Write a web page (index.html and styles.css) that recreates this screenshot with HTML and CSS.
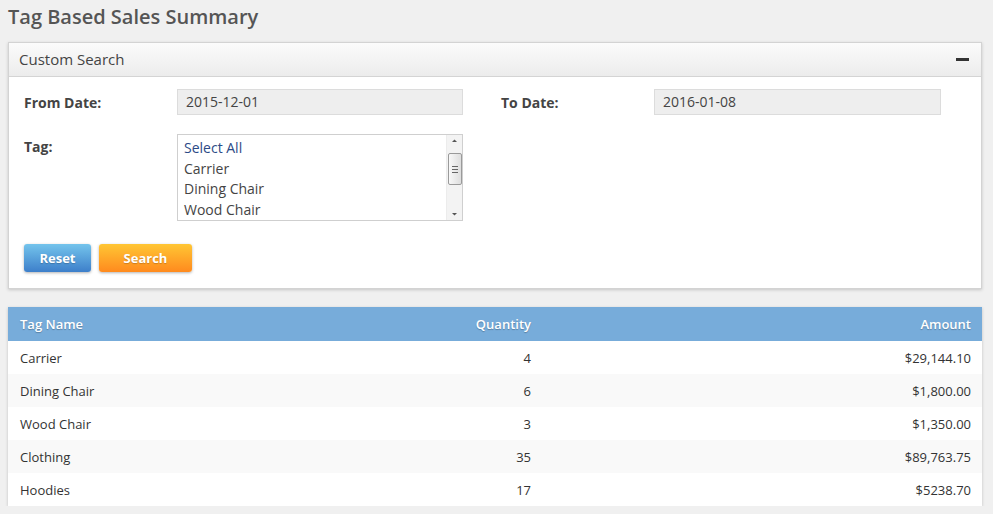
FILE: index.html
```html
<!DOCTYPE html>
<html>
<head>
<meta charset="utf-8">
<link rel="stylesheet" href="styles.css">
</head>
<body>
<h1 class="page-title">Tag Based Sales Summary</h1>

<section class="panel">
  <div class="panel-head">
    <span class="panel-title">Custom Search</span>
    <span class="collapse-icon"></span>
  </div>
  <div class="panel-body">
    <div class="form-grid">
      <label class="field-label center">From Date:</label>
      <div class="text-input">2015-12-01</div>
      <div></div>
      <label class="field-label center">To Date:</label>
      <div class="text-input">2016-01-08</div>

      <label class="field-label top">Tag:</label>
      <div class="listbox">
        <ul class="options">
          <li class="opt first">Select All</li>
          <li class="opt">Carrier</li>
          <li class="opt">Dining Chair</li>
          <li class="opt">Wood Chair</li>
        </ul>
        <div class="scrollbar">
          <svg class="arrow" width="15" height="12" viewBox="0 0 15 12"><path d="M5 7 L7.5 4.5 L10 7 Z" fill="#555"/></svg>
          <div class="thumb">
            <span></span><span></span><span></span>
          </div>
          <div class="track"></div>
          <svg class="arrow" width="15" height="12" viewBox="0 0 15 12"><path d="M5 5 L7.5 7.5 L10 5 Z" fill="#555"/></svg>
        </div>
      </div>
    </div>
    <div class="actions">
      <button class="btn btn-blue">Reset</button>
      <button class="btn btn-orange">Search</button>
    </div>
  </div>
</section>

<table class="data-table">
  <thead>
    <tr><th class="c-name">Tag Name</th><th class="c-qty">Quantity</th><th class="c-amt">Amount</th></tr>
  </thead>
  <tbody>
    <tr><td class="c-name">Carrier</td><td class="c-qty">4</td><td class="c-amt">$29,144.10</td></tr>
    <tr><td class="c-name">Dining Chair</td><td class="c-qty">6</td><td class="c-amt">$1,800.00</td></tr>
    <tr><td class="c-name">Wood Chair</td><td class="c-qty">3</td><td class="c-amt">$1,350.00</td></tr>
    <tr><td class="c-name">Clothing</td><td class="c-qty">35</td><td class="c-amt">$89,763.75</td></tr>
    <tr><td class="c-name">Hoodies</td><td class="c-qty">17</td><td class="c-amt">$5238.70</td></tr>
  </tbody>
</table>
</body>
</html>
```

FILE: styles.css
```css
* { box-sizing: border-box; }
html, body { margin: 0; padding: 0; }
body {
  background: #f0f0f0;
  font-family: "Open Sans", "Liberation Sans", sans-serif;
  color: #333;
  padding: 0 11px 0 8px;
}
.page-title {
  margin: 0;
  padding-top: 2px;
  height: 42px;
  font-size: 20px;
  line-height: 30px;
  font-weight: 600;
  color: #555;
}
.panel {
  background: #fff;
  border: 1px solid #d3d3d3;
  box-shadow: 0 1px 3px rgba(0,0,0,0.18);
}
.panel-head {
  height: 34px;
  display: flex;
  align-items: center;
  justify-content: space-between;
  padding: 0 12px 0 10px;
  background: linear-gradient(#fbfbfb, #ececec);
  border-bottom: 1px solid #d4d4d4;
}
.panel-title {
  font-size: 15px;
  color: #444;
  margin-top: -1px;
}
.collapse-icon {
  width: 13px;
  height: 3px;
  background: #333;
  margin-top: -1px;
}
.panel-body {
  padding: 12px 15px 16px 15px;
}
.form-grid {
  display: grid;
  grid-template-columns: 153px 286px 38px 153px 287px;
  grid-template-rows: 26px 87px;
  row-gap: 19px;
}
.field-label {
  font-size: 14px;
  font-weight: 700;
  color: #444;
}
.field-label.center { align-self: center; }
.field-label.top { padding-top: 3px; }
.text-input {
  background: #eeeeee;
  border: 1px solid #dcdcdc;
  font-size: 14px;
  line-height: 24px;
  padding-left: 8px;
  color: #444;
}
.listbox {
  border: 1px solid #cfcfcf;
  display: flex;
  background: #fff;
}
.options {
  list-style: none;
  margin: 0;
  padding: 3px 0 0 6px;
  flex: 1;
  overflow: hidden;
}
.opt {
  font-size: 14px;
  line-height: 20.5px;
  color: #444;
}
.opt.first { color: #2c4a86; }
.scrollbar {
  width: 16px;
  background: #f3f3f3;
  border-left: 1px solid #ececec;
  display: flex;
  flex-direction: column;
  align-items: center;
}
.arrow { display: block; flex: none; }
.thumb {
  width: 14px;
  height: 32px;
  margin-top: 6px;
  border: 1px solid #9a9a9a;
  border-radius: 2px;
  background: linear-gradient(90deg, #f8f8f8, #dedede);
  display: flex;
  flex-direction: column;
  align-items: center;
  justify-content: center;
  gap: 2px;
}
.thumb span {
  display: block;
  width: 6px;
  height: 1px;
  background: #666;
}
.track { flex: 1; }
.actions {
  display: flex;
  gap: 8px;
  margin-top: 23px;
}
.btn {
  height: 28px;
  border: none;
  border-radius: 3px;
  font-family: "Open Sans", "Liberation Sans", sans-serif;
  font-size: 13px;
  font-weight: 700;
  color: #fff;
  text-shadow: 0 1px 1px rgba(0,0,0,0.2);
  box-shadow: 0 1px 3px rgba(0,0,0,0.3);
  padding: 0;
}
.btn-blue {
  width: 67px;
  background: linear-gradient(#74c4ec, #3d7fca);
}
.btn-orange {
  width: 93px;
  background: linear-gradient(#ffc634, #ff8a1e);
}
.data-table {
  margin-top: 18px;
  width: 100%;
  border-collapse: collapse;
  background: #fff;
  box-shadow: 0 1px 3px rgba(0,0,0,0.2);
}
.data-table th {
  height: 34px;
  background: #77acda;
  color: #fff;
  font-size: 13px;
  font-weight: 600;
  text-shadow: 0 1px 1px rgba(0,0,0,0.25);
  padding: 0 11px 0 12px;
}
.data-table td {
  height: 33px;
  font-size: 13px;
  color: #333;
  padding: 0 11px 0 12px;
}
.data-table tbody tr:nth-child(even) td { background: #f9f9f9; }
.c-name { text-align: left; width: 400px; }
.c-qty { text-align: right; width: 134px; }
.c-amt { text-align: right; }
```
